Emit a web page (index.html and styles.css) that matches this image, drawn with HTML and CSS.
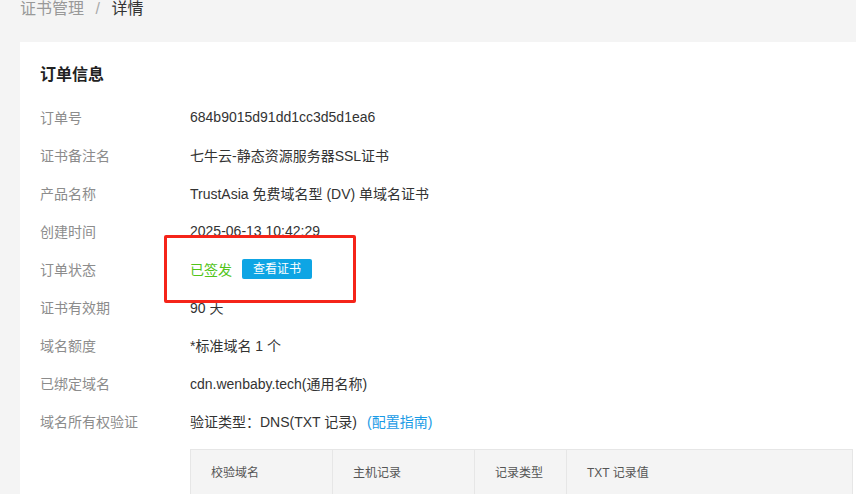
FILE: index.html
```html
<!DOCTYPE html>
<html lang="zh-CN">
<head>
    <meta charset="UTF-8">
    <meta name="viewport" content="width=device-width, initial-scale=1.0">
    <title>证书详情</title>
    <link rel="stylesheet" href="styles.css">
</head>
<body>
    <div class="breadcrumb">
        <span class="crumb">证书管理</span>
        <span class="sep">/</span>
        <span class="crumb current">详情</span>
    </div>

    <div class="card">
        <h2>订单信息</h2>

        <div class="info-row">
            <div class="label">订单号</div>
            <div class="value">684b9015d91dd1cc3d5d1ea6</div>
        </div>
        <div class="info-row">
            <div class="label">证书备注名</div>
            <div class="value">七牛云-静态资源服务器SSL证书</div>
        </div>
        <div class="info-row">
            <div class="label">产品名称</div>
            <div class="value">TrustAsia 免费域名型 (DV) 单域名证书</div>
        </div>
        <div class="info-row">
            <div class="label">创建时间</div>
            <div class="value">2025-06-13 10:42:29</div>
        </div>
        <div class="info-row status-row">
            <div class="label">订单状态</div>
            <div class="value">
                <span class="status">已签发</span>
                <button class="view-btn">查看证书</button>
            </div>
            <div class="highlight"></div>
        </div>
        <div class="info-row">
            <div class="label">证书有效期</div>
            <div class="value">90 天</div>
        </div>
        <div class="info-row">
            <div class="label">域名额度</div>
            <div class="value">*标准域名 1 个</div>
        </div>
        <div class="info-row">
            <div class="label">已绑定域名</div>
            <div class="value">cdn.wenbaby.tech(通用名称)</div>
        </div>
        <div class="info-row">
            <div class="label">域名所有权验证</div>
            <div class="value">验证类型：DNS(TXT 记录)<a href="#" class="link">(配置指南)</a></div>
        </div>

        <table class="dns-table">
            <thead>
                <tr>
                    <th class="col-domain">校验域名</th>
                    <th class="col-host">主机记录</th>
                    <th class="col-type">记录类型</th>
                    <th>TXT 记录值</th>
                </tr>
            </thead>
            <tbody>
                <tr>
                    <td></td>
                    <td></td>
                    <td></td>
                    <td></td>
                </tr>
            </tbody>
        </table>
    </div>
</body>
</html>
```

FILE: styles.css
```css
body {
    margin: 0;
    background-color: #f4f4f4;
    font-family: "Liberation Sans", "Noto Sans CJK SC", sans-serif;
    color: #333;
    overflow: hidden;
}
.breadcrumb {
    padding-left: 20px;
    font-size: 16px;
    line-height: 18px;
    height: 42px;
}
.breadcrumb .crumb {
    color: #999;
}
.breadcrumb .sep {
    color: #aaa;
    margin: 0 7px;
}
.breadcrumb .current {
    color: #333;
}
.card {
    margin-left: 20px;
    background-color: #fff;
    padding: 22px 0 40px 20px;
}
.card h2 {
    margin: 0 0 12px;
    font-size: 16px;
    line-height: 22px;
    font-weight: bold;
    color: #222;
}
.info-row {
    display: flex;
    align-items: center;
    height: 38px;
    font-size: 14px;
}
.info-row .label {
    width: 150px;
    color: #8c8c8c;
}
.info-row .value {
    color: #333;
    display: flex;
    align-items: center;
}
.status-row {
    position: relative;
}
.status {
    color: #52c41a;
}
.view-btn {
    margin-left: 10px;
    height: 20px;
    padding: 0 11px;
    border: none;
    border-radius: 2px;
    background-color: #0ea5e4;
    color: #fff;
    font-family: inherit;
    font-size: 12px;
    line-height: 20px;
}
.highlight {
    position: absolute;
    left: 124px;
    top: -15px;
    width: 192px;
    height: 68px;
    box-sizing: border-box;
    border: 3px solid #f52419;
    border-radius: 2px;
}
.link {
    color: #1a9be6;
    text-decoration: none;
    margin-left: 10px;
}
.dns-table {
    margin: 9px 0 0 150px;
    width: 663px;
    border-collapse: collapse;
    font-size: 12px;
    color: #555;
}
.dns-table th,
.dns-table td {
    border: 1px solid #e6e6e6;
    padding: 0 20px;
    height: 42px;
    text-align: left;
    font-weight: normal;
}
.dns-table th {
    background-color: #f4f4f4;
    padding-bottom: 2px;
}
.dns-table .col-domain,
.dns-table .col-host {
    width: 101px;
}
.dns-table .col-type {
    width: 51px;
}
```
